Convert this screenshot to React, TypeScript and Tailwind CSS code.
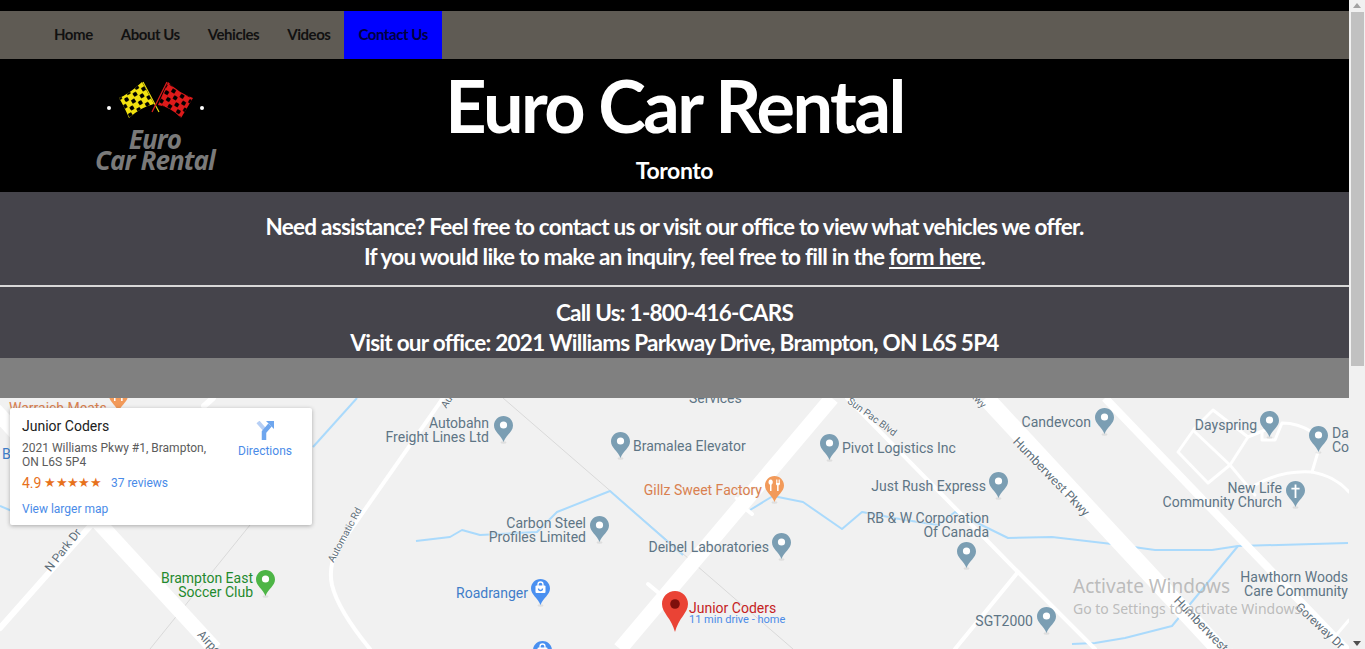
const navItems = ["Home", "About Us", "Vehicles", "Videos"];

// map labels: x is the left edge, or the right edge when right is set. y is the middle of the first line, in page coordinates
const MAP_TOP = 398;
const labels = [
  { x: 9, y: 408, lines: ["Warraich Meats"], color: "text-[#d9804f]" },
  { x: 2, y: 454, lines: ["B"], color: "text-[#3f7dc9]" },
  { x: 689, y: 398, lines: ["Services"] },
  { x: 489, y: 423, right: true, lines: ["Autobahn", "Freight Lines Ltd"] },
  { x: 633, y: 446, lines: ["Bramalea Elevator"] },
  { x: 842, y: 448, lines: ["Pivot Logistics Inc"] },
  { x: 762, y: 490, right: true, lines: ["Gillz Sweet Factory"], color: "text-[#d9804f]" },
  { x: 986, y: 486, right: true, lines: ["Just Rush Express"] },
  { x: 1091, y: 422, right: true, lines: ["Candevcon"] },
  { x: 1257, y: 425, right: true, lines: ["Dayspring"] },
  { x: 1332, y: 433, lines: ["Dayspring", "Community"] },
  { x: 1282, y: 488, right: true, lines: ["New Life", "Community Church"] },
  { x: 989, y: 518, right: true, lines: ["RB & W Corporation", "Of Canada"] },
  { x: 586, y: 523, right: true, lines: ["Carbon Steel", "Profiles Limited"] },
  { x: 769, y: 547, right: true, lines: ["Deibel Laboratories"] },
  { x: 528, y: 593, right: true, lines: ["Roadranger"], color: "text-[#3f7dc9]" },
  { x: 1033, y: 621, right: true, lines: ["SGT2000"] },
  { x: 1348, y: 577, right: true, lines: ["Hawthorn Woods", "Care Community"] },
  { x: 253, y: 578, right: true, lines: ["Brampton East", "Soccer Club"], color: "text-[#1f8a2e]" },
];

const pins = [
  { cx: 118, top: 386, color: "#f29a5a", kind: "fork" },
  { cx: 503, top: 416, color: "#7b9eb3", kind: "dot" },
  { cx: 620, top: 432, color: "#7b9eb3", kind: "dot" },
  { cx: 829, top: 434, color: "#7b9eb3", kind: "dot" },
  { cx: 1104, top: 408, color: "#7b9eb3", kind: "dot" },
  { cx: 1269, top: 411, color: "#7b9eb3", kind: "dot" },
  { cx: 1318, top: 426, color: "#7b9eb3", kind: "dot" },
  { cx: 1295, top: 481, color: "#7b9eb3", kind: "cross" },
  { cx: 998, top: 472, color: "#7b9eb3", kind: "dot" },
  { cx: 966, top: 542, color: "#7b9eb3", kind: "dot" },
  { cx: 1046, top: 607, color: "#7b9eb3", kind: "dot" },
  { cx: 781, top: 533, color: "#7b9eb3", kind: "dot" },
  { cx: 599, top: 516, color: "#7b9eb3", kind: "dot" },
  { cx: 774, top: 476, color: "#f29a5a", kind: "fork" },
  { cx: 540, top: 579, color: "#4a90f0", kind: "bag" },
  { cx: 542, top: 641, color: "#4a90f0", kind: "bag" },
  { cx: 265, top: 570, color: "#4db546", kind: "dot" },
];

const roadLabels = [
  { cx: 63, cy: 550, deg: -52, size: "text-[12px]", text: "N Park Dr" },
  { cx: 345, cy: 535, deg: -62, size: "text-[10px]", text: "Automatic Rd" },
  { cx: 1051, cy: 477, deg: 46, size: "text-[12.500px]", text: "Humberwest Pkwy" },
  { cx: 1212, cy: 636, deg: 46, size: "text-[12.500px]", text: "Humberwest Pkwy" },
  { cx: 1320, cy: 626, deg: 43, size: "text-[12px]", text: "Goreway Dr" },
  { cx: 872, cy: 417, deg: 36, size: "text-[10px]", text: "Sun Pac Blvd" },
  { cx: 218, cy: 652, deg: 47, size: "text-[12px]", text: "Airport Rd" },
  { cx: 447, cy: 402, deg: -58, size: "text-[10px]", text: "Au" },
  { cx: 976, cy: 398, deg: 46, size: "text-[10px]", text: "Pkwy" },
];

function Pin({ color, kind }: { color: string; kind: string }) {
  return (
    <svg width="19" height="28" viewBox="0 0 19 28">
      <ellipse cx="9.5" cy="26.5" rx="3" ry="1.3" fill="#000" opacity="0.08" />
      <path d="M9.5 0C4.2 0 0 4.2 0 9.4c0 6.4 6.8 9.2 9.5 16.6C12.2 18.6 19 15.8 19 9.4 19 4.2 14.8 0 9.5 0z" fill={color} />
      {kind === "dot" && <circle cx="9.5" cy="9" r="3.6" fill="#fff" />}
      {kind === "cross" && <path d="M8.6 3.5h1.8v3.2h3.2v1.7h-3.2v8.6H8.6V8.4H5.4V6.7h3.2z" fill="#fff" />}
      {kind === "fork" && (
        <path d="M5.5 3.5c2 0 2.6 2 2.2 3.6-.2.9-.7 1.400-1.200 1.600V15H5V8.700c-1-.4-1.500-1.500-1.500-2.500 0-1.500.8-2.700 2-2.700zM11 3.500h.8v3.500h.8V3.500h.8v3.500h.8V3.500h.8v4.200c0 .9-.7 1.400-1.400 1.600V15h-1.500V9.300c-.7-.2-1.100-.8-1.100-1.600z" fill="#fff" />
      )}
      {kind === "bag" && (
        <g fill="none" stroke="#fff" strokeWidth="1.3">
          <rect x="4.500" y="6.500" width="10" height="7.500" rx="1" fill="#fff" stroke="none" />
          <path d="M7 7V5.500a2.500 2.500 0 0 1 5 0V7" />
          <path d="M7.500 9.500a2 2 0 0 0 4 0" stroke={color} />
        </g>
      )}
    </svg>
  );
}

function Logo() {
  return (
    <div className="flex flex-col items-center w-[120px]">
      <svg width="100" height="40" viewBox="0 0 100 40" className="mt-[7px]">
        <defs>
          <pattern id="checkY" width="10" height="10" patternUnits="userSpaceOnUse" patternTransform="rotate(-32) translate(1 1)">
            <rect width="4" height="4" rx="0.8" fill="#000" />
            <rect x="5" y="5" width="4" height="4" rx="0.8" fill="#000" />
          </pattern>
          <pattern id="checkR" width="10" height="10" patternUnits="userSpaceOnUse" patternTransform="rotate(32) translate(2 1)">
            <rect width="4" height="4" rx="0.8" fill="#000" />
            <rect x="5" y="5" width="4" height="4" rx="0.8" fill="#000" />
          </pattern>
        </defs>
        <circle cx="4" cy="28" r="2" fill="#fff" />
        <circle cx="97" cy="28" r="2" fill="#fff" />
        <path d="M38 2 L54 32" stroke="#e8d90f" strokeWidth="1.200" />
        <path d="M62 2 L47 32" stroke="#d81c1c" strokeWidth="1.200" />
        <path d="M14 18 Q24 14 37 2 L49 24 Q36 27 24 38 Q19 26 14 18z" fill="#f2e20f" />
        <path d="M14 18 Q24 14 37 2 L49 24 Q36 27 24 38 Q19 26 14 18z" fill="url(#checkY)" />
        <path d="M63 2 Q74 13 88 18 L76 38 Q66 27 53 25z" fill="#dd1a1a" />
        <path d="M63 2 Q74 13 88 18 L76 38 Q66 27 53 25z" fill="url(#checkR)" />
      </svg>
      <div className="font-['Open_Sans',sans-serif] italic font-bold text-[#7a7a7a] text-[26px] leading-[21px] tracking-[-0.9px] text-center mt-[9px] whitespace-nowrap">
        <div>Euro</div>
        <div>Car Rental</div>
      </div>
    </div>
  );
}

function Scrollbar() {
  return (
    <div className="w-4 shrink-0 h-[649px] bg-[#f1f1f1] flex flex-col items-center justify-between pb-[3px] pt-[3px]">
      <div className="w-0 h-0 border-x-[4px] border-x-transparent border-b-[5px] border-b-[#a3a3a3]" />
      <div className="absolute top-[12px] w-[13px] h-[354px] bg-[#c1c1c1]" />
      <div className="w-0 h-0 border-x-[4px] border-x-transparent border-t-[5px] border-t-[#505050]" />
    </div>
  );
}

function MapCard() {
  return (
    <div className="absolute left-[10px] top-[10px] w-[302px] h-[117px] bg-white rounded-[2px] shadow-[0_1px_4px_rgba(0,0,0,0.3)] px-[12px] pt-[10px] font-['Roboto',sans-serif] flex">
      <div className="w-[208px] shrink-0">
        <div className="text-[14px] leading-[16px] text-[#202020]">Junior Coders</div>
        <div className="text-[12px] leading-[14px] text-[#5b5b5b] mt-[7px]">
          2021 Williams Pkwy #1, Brampton,<br />ON L6S 5P4
        </div>
        <div className="flex items-center mt-[6px] h-[16px]">
          <span className="text-[14px] text-[#e7711b] leading-[16px]">4.9</span>
          <span className="text-[13px] text-[#e7711b] leading-[16px] ml-[3px] tracking-[-0.7px]">★★★★★</span>
          <span className="text-[12px] text-[#4a8be8] leading-[16px] ml-[10px]">37 reviews</span>
        </div>
        <div className="text-[12px] leading-[14px] text-[#4a8be8] mt-[11px]">View larger map</div>
      </div>
      <div className="flex flex-col items-center w-[82px] -mt-[1px]">
        <svg width="18" height="19" viewBox="0 0 18 19" className="mt-[4px]">
          <path d="M2 1 L9 9" stroke="#b6cff5" strokeWidth="4" fill="none" />
          <path d="M8 19 V11 L14 4" stroke="#6ea6ee" strokeWidth="4.500" fill="none" />
          <path d="M10 0 H18 V8z" fill="#6ea6ee" />
        </svg>
        <div className="text-[12px] leading-[14px] text-[#4a8be8] mt-[4px]">Directions</div>
      </div>
    </div>
  );
}

function MapView() {
  return (
    <div className="relative h-[251px] overflow-hidden bg-[#f1f1f1] font-['Roboto',sans-serif]">
      <svg width="1349" height="251" viewBox="0 398 1349 251" className="absolute left-0 top-0" fill="none">
        {/* rail lines */}
        <g stroke="#d9d9d9" strokeWidth="1">
          <path d="M503 398 L793 649" />
          <path d="M250 525 L150 649" />
        </g>
        {/* water */}
        <g stroke="#aadafc" strokeWidth="2" strokeLinejoin="round">
          <path d="M416 541 L450 537 L462 530 L480 535 L537 532 L557 512 L610 491 L683 555" />
          <path d="M750 510 L773 496 L803 502 L842 529 L862 512 L905 520 L938 525 L955 512 L1008 538 L1052 537 L1112 544 L1155 550 L1212 550 L1238 546 L1348 543" />
          <path d="M1238 546 L1172 626 L1125 638 L1095 643 L1072 644" />
          <path d="M313 447 L357 398" />
          <path d="M0 506 L12 511" />
        </g>
        {/* roads */}
        <g stroke="#ffffff" strokeLinejoin="round" strokeLinecap="round">
          <path d="M832 398 L620 649" strokeWidth="15" strokeLinecap="butt" />
          <path d="M986 398 L1219 649" strokeWidth="17" strokeLinecap="butt" />
          <path d="M1105 398 L1349 652" strokeWidth="8" strokeLinecap="butt" />
          <path d="M-5 410 L215 649" strokeWidth="15" strokeLinecap="butt" />
          <path d="M0 628 L100 515" strokeWidth="6" />
          <path d="M213 398 L204 406" strokeWidth="6" />
          <path d="M847 398 L1018 572 L1095 649" strokeWidth="4" />
          <path d="M1018 572 L955 649" strokeWidth="4" />
          <path d="M443 398 L338 548 Q328 566 332 585 Q338 610 370 649" strokeWidth="4" />
          {/* estate loop by Dayspring */}
          <path d="M1248 437 L1230 465 L1208 483 L1178 452 L1195 428 L1213 410 L1248 437 L1265 430" strokeWidth="3" />
          <path d="M1195 432 L1230 465 L1255 495" strokeWidth="3" />
          <path d="M1262 432 L1262 440 L1275 440 L1282 423 Q1298 423 1312 432" strokeWidth="3" />
          <path d="M1255 485 Q1282 470 1312 472 Q1335 476 1349 492" strokeWidth="3" />
          <path d="M1312 472 L1318 452" strokeWidth="3" />
          <path d="M1349 620 L1332 640" strokeWidth="3" />
          <path d="M648 584 L660 594" strokeWidth="4" />
          <path d="M736 498 L746 508" strokeWidth="3" />
          <path d="M742 506 L752 514" strokeWidth="4" />
        </g>
      </svg>

      {labels.map((l) => (
        <div
          key={l.lines[0] + l.x}
          className={`absolute text-[14px] leading-[14px] whitespace-nowrap [text-shadow:0_0_2px_#f1f1f1,0_0_2px_#f1f1f1] ${l.right ? "text-right" : "text-left"} ${l.color ?? "text-[#5e7585]"}`}
          style={{
            top: l.y - MAP_TOP - 7,
            ...(l.right ? { right: 1349 - l.x } : { left: l.x }),
          }}
        >
          {l.lines.map((t) => (
            <div key={t}>{t}</div>
          ))}
        </div>
      ))}

      {roadLabels.map((r) => (
        <div
          key={r.text + r.cx}
          className={`absolute leading-none whitespace-nowrap text-[#5f6f7a] [text-shadow:0_0_2px_#fff,0_0_2px_#fff] ${r.size}`}
          style={{ left: r.cx, top: r.cy - MAP_TOP, transform: `translate(-50%,-50%) rotate(${r.deg}deg)` }}
        >
          {r.text}
        </div>
      ))}

      {pins.map((p) => (
        <div key={p.cx} className="absolute" style={{ left: p.cx - 9.5, top: p.top - MAP_TOP }}>
          <Pin color={p.color} kind={p.kind} />
        </div>
      ))}

      {/* selected place */}
      <svg width="26" height="43" viewBox="0 0 26 43" className="absolute left-[662px] top-[193px]">
        <path d="M13 0C5.800 0 0 5.800 0 13c0 9 9.500 14 13 28 3.500-14 13-19 13-28C26 5.800 20.200 0 13 0z" fill="#ea4335" />
        <circle cx="13" cy="13" r="4.800" fill="#7e0f0c" />
      </svg>
      <div className="absolute left-[689px] top-[203px] text-[14px] leading-[14px] text-[#c5221f] whitespace-nowrap [text-shadow:0_0_2px_#f1f1f1]">Junior Coders</div>
      <div className="absolute left-[689px] top-[216px] text-[11px] leading-[12px] text-[#4a8be8] whitespace-nowrap [text-shadow:0_0_2px_#f1f1f1]">11 min drive - home</div>

      <MapCard />

      {/* windows watermark */}
      <div className="absolute left-[1073px] top-[176px] font-['Noto_Sans',sans-serif] text-[#b5b5b5]/90 whitespace-nowrap">
        <div className="text-[19px] leading-[24px]">Activate Windows</div>
        <div className="text-[14px] leading-[20px] mt-[1px]">Go to Settings to activate Windows.</div>
      </div>
    </div>
  );
}

export default function App() {
  return (
    <div className="flex h-[649px] w-[1365px] overflow-hidden relative">
      <div className="w-[1349px] shrink-0 font-['Lato',sans-serif]">
        <div className="h-[11px] bg-black" />
        <nav className="h-[48px] bg-[#5f5b54] flex pl-[40px]">
          {navItems.map((item) => (
            <a key={item} className="px-[14px] flex items-center pb-[2px] text-[15px] font-bold tracking-[-0.45px] text-[#111111]">
              {item}
            </a>
          ))}
          <a className="px-[14px] flex items-center pb-[2px] text-[15px] font-bold tracking-[-0.45px] text-[#000040] bg-[#0000ff]">Contact Us</a>
        </nav>

        <header className="h-[133px] bg-black grid grid-cols-[1fr_auto_1fr]">
          <div className="pl-[95px] pt-[14px]">
            <Logo />
          </div>
          <div className="text-center text-white font-bold">
            <h1 className="text-[72px] leading-[92px] tracking-[-2.5px]">Euro Car Rental</h1>
            <h2 className="text-[23px] leading-[30px] tracking-[-0.4px] mt-[4px]">Toronto</h2>
          </div>
          <div />
        </header>

        <section className="h-[166px] bg-[#45444b] text-center text-white text-[22.5px] leading-[30px] font-bold tracking-[-0.74px] pt-[20px] overflow-hidden">
          <p>Need assistance? Feel free to contact us or visit our office to view what vehicles we offer.</p>
          <p>
            If you would like to make an inquiry, feel free to fill in the <a className="underline">form here</a>.
          </p>
          <hr className="mt-[13px] mb-[11px] border-0 h-[2px] bg-[#d8d8d8]" />
          <p>Call Us: 1-800-416-CARS</p>
          <p>Visit our office: 2021 Williams Parkway Drive, Brampton, ON L6S 5P4</p>
        </section>

        <div className="h-[40px] bg-[#808080]" />
        <MapView />
      </div>
      <Scrollbar />
    </div>
  );
}
